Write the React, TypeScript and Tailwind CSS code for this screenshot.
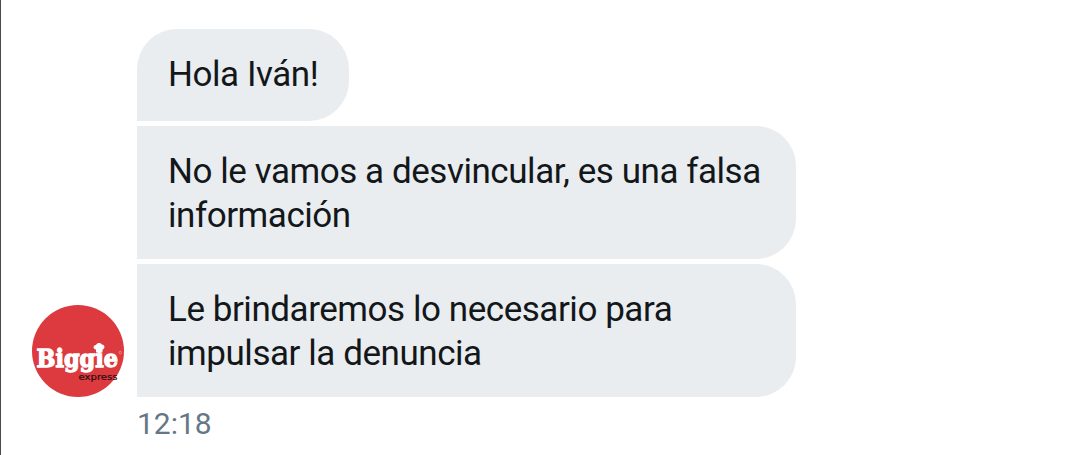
import React from "react";

interface Message {
  id: number;
  lines: string[];
  className: string;
}

const messages: Message[] = [
  {
    id: 1,
    lines: ["Hola Iván!"],
    className: "w-[212px] h-[92px] rounded-t-[40px] rounded-br-[40px]",
  },
  {
    id: 2,
    lines: ["No le vamos a desvincular, es una falsa", "información"],
    className: "w-[659px] h-[133px] pt-[3px] rounded-r-[40px]",
  },
  {
    id: 3,
    lines: ["Le brindaremos lo necesario para", "impulsar la denuncia"],
    className: "w-[659px] h-[133px] pt-[3px] rounded-r-[40px]",
  },
];

function Avatar() {
  return (
    <svg className="w-[92px] h-[92px] shrink-0" viewBox="0 0 92 92">
      <circle cx="46" cy="46" r="46" fill="#dc3a3e" />
      <text
        x="4.5"
        y="62"
        fontFamily="DejaVu Serif, serif"
        fontWeight="700"
        fontSize="24"
        textLength="81.5"
        lengthAdjust="spacingAndGlyphs"
        fill="#fff"
        stroke="#fff"
        strokeWidth="1.3"
      >
        Biggie
      </text>
      {/* chef hat over the last i */}
      <path
        d="M64 47.5v-3c-3.2-.4-3.2-4.6 0-4.6 1.4-2.6 5-2.4 5.8-.3 3.2-.2 3.6 4.4.6 5.2v2.7z"
        fill="#fff"
      />
      <circle cx="88.3" cy="47.5" r="1.2" fill="none" stroke="#f3a3a4" strokeWidth="0.7" />
      <text
        x="46.5"
        y="74.5"
        fontFamily="DejaVu Sans, sans-serif"
        fontSize="9.5"
        textLength="39"
        lengthAdjust="spacingAndGlyphs"
        fill="#2b0d0f"
        stroke="#2b0d0f"
        strokeWidth="0.2"
      >
        express
      </text>
    </svg>
  );
}

export default function App() {
  return (
    <div className="h-[455px] w-full bg-white border-l border-[#4a4a4a] pl-[31px] pt-[29px] font-[Roboto,sans-serif]">
      <div className="flex items-end gap-[13px]">
        <Avatar />
        <div className="flex flex-col gap-[5px]">
          {messages.map((message) => (
            <div
              key={message.id}
              className={`bg-[#e9edf0] pl-[31px] flex flex-col justify-center text-[35px] leading-[44px] tracking-[-0.45px] text-[#14171a] whitespace-nowrap ${message.className}`}
            >
              {message.lines.map((line) => (
                <p key={line}>{line}</p>
              ))}
            </div>
          ))}
        </div>
      </div>
      <p className="ml-[105px] mt-2 text-[30px] leading-[38px] text-[#657786]">
        12:18
      </p>
    </div>
  );
}
